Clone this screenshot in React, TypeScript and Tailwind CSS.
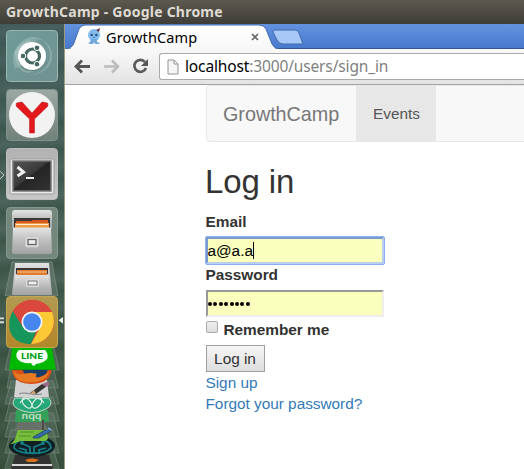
import React from "react";

function Tile({ children, tone }: { children: React.ReactNode; tone: string }) {
  return (
    <div className={`h-[52px] w-[52px] shrink-0 overflow-hidden rounded-[4px] border ${tone}`}>
      <svg viewBox="1 1 50 50" className="block h-full w-full">{children}</svg>
    </div>
  );
}

function Cabinet() {
  return (
    <g>
      <path d="M6 6 Q6 3 9 3 H43 Q46 3 46 6 V21 H6Z" fill="url(#silver)" />
      <path d="M8 11H44V21H8Z" fill="#393737" />
      <path d="M10 14H25L27 13H42V22H10Z" fill="#d65a1d" />
      <path d="M9 16H43V22H9Z" fill="#f09a45" />
      <path d="M10 17.5H42" stroke="#fff0dc" strokeWidth="1" />
      <path d="M7 21H45L46 45Q46 47 44 47H8Q6 47 6 45Z" fill="url(#silver)" />
      <path d="M7 21H45.5" stroke="#dedede" />
      <rect x="19.5" y="30" width="13" height="10" rx="1" fill="#dedede" stroke="#c9c9c9" />
      <rect x="22" y="32.5" width="8" height="5" fill="#eee" stroke="#666" strokeWidth="1.3" />
    </g>
  );
}

function Defs() {
  return (
    <svg className="absolute h-0 w-0">
      <defs>
        <linearGradient id="silver" x2="0" y2="1">
          <stop stopColor="#e3e3e3" /><stop offset=".5" stopColor="#bdbdbd" /><stop offset="1" stopColor="#a2a2a2" />
        </linearGradient>
        <linearGradient id="screen" x2="1" y2="1">
          <stop stopColor="#555" /><stop offset=".45" stopColor="#3b3b3b" /><stop offset=".5" stopColor="#252525" /><stop offset="1" stopColor="#333" />
        </linearGradient>
        <linearGradient id="tab" x2="0" y2="1">
          <stop stopColor="#fff" /><stop offset="1" stopColor="#f8f8f8" />
        </linearGradient>
      </defs>
    </svg>
  );
}

function FoldedStack() {
  return (
    <svg viewBox="0 348 65 121" className="block h-[121px] w-[65px] shrink-0">
      <g fill="#73877b" fillOpacity=".28" stroke="#86968d" strokeOpacity=".5">
        <path d="M10 348H54L59 370H5Z" />
        <path d="M11 366H53L58 388H7Z" />
        <path d="M11 381H53L59 404H5Z" />
        <path d="M11 397H53L59 421H5Z" />
        <path d="M11 413H53L59 437H5Z" />
        <path d="M11 430H53L59 453H5Z" />
        <path d="M11 447H53L59 469H5Z" />
      </g>
      <path d="M15 455H49L53 469H11Z" fill="#343333" />
      <path d="M12 465H52" stroke="#d8d8d8" strokeWidth="2" />
      <path d="M25 460Q32 457 39 460L35 462H28Z" fill="#dd721d" />
      <ellipse cx="32" cy="446" rx="23" ry="11" fill="#101f24" />
      <g fill="none" stroke="#147f88" strokeWidth="1.8">
        <path d="M14 448C13 435 51 435 51 448C45 455 20 455 14 448Z" />
        <path d="M30 454V447L23 444M34 454V447L42 444M26 454V450L19 448M39 454V450L46 448" />
        <circle cx="22" cy="443" r="1" /><circle cx="43" cy="443" r="1" />
      </g>
      <path d="M18 429H46L48 437Q48 441 44 441H20Q14 444 10 444Q15 441 16 436Z" fill="#78bd3c" />
      <path d="M20 432H34M19 436H31" stroke="#548f2e" strokeWidth="1" />
      <path d="M33 437L47 429L51 431L39 438L33 438Z" fill="#346ba2" stroke="#243f61" strokeWidth=".7" />
      <path d="M48 428L51 430" stroke="#7bace1" strokeWidth="2" />
      <path d="M16 410H48L49 422H15Z" fill="#35a058" />
      <path d="M18 422H44L48 430H14Z" fill="#697069" />
      <text x="31.5" y="419" textAnchor="middle" textLength="20" lengthAdjust="spacingAndGlyphs" fill="#b9dfc8" fontFamily="Lato, sans-serif" fontWeight="bold" fontSize="9">nqq</text>
      <path d="M43 420V430" stroke="#4c4c4c" strokeWidth="2" />
      <path d="M15 398H49Q54 405 46 409Q32 416 18 409Q10 405 15 398Z" fill="#26a777" stroke="#c1d9ce" />
      <g fill="none" stroke="#e3f2eb" strokeWidth="1.2">
        <ellipse cx="27" cy="403" rx="3.5" ry="6" transform="rotate(-42 27 403)" />
        <ellipse cx="37" cy="403" rx="3.5" ry="6" transform="rotate(42 37 403)" />
        <path d="M20 403C24 396 40 396 44 403" />
      </g>
      <path d="M16 380H47L49 397H14Z" fill="#d2d3d2" />
      <path d="M19 394C25 391 31 396 42 394" fill="none" stroke="#7c8085" />
      <path d="M30 393L42 384L47 386L36 394Z" fill="#363637" />
      <path d="M42 384L47 382L50 384L46 387Z" fill="#9d698a" />
      <path d="M30 394L34 390L36 394Z" fill="#cfa477" />
      <path d="M12 369H52Q51 378 43 382Q31 386 20 382Q12 378 12 369Z" fill="#d65017" />
      <path d="M22 369H48Q47 377 34 378Q25 377 22 369Z" fill="#173d68" />
      <path d="M13 370C19 379 25 370 37 374C32 380 44 378 49 371C49 382 28 385 19 380Q14 377 13 370Z" fill="#e67922" />
      <path d="M12 348H52L56 370H9Z" fill="#00b900" />
      <path d="M9.5 369.5H55.5" stroke="#07951a" />
      <path d="M19 350H45Q49 354 47 359Q44 363 36 364L34 366Q32 366 31 363Q20 364 17 358Q15 353 19 350Z" fill="#f5fff5" />
      <text x="32" y="359" textAnchor="middle" textLength="22" lengthAdjust="spacingAndGlyphs" fill="#009f16" fontFamily="Lato, sans-serif" fontWeight="900" fontSize="7.5">LINE</text>
    </svg>
  );
}

function Launcher() {
  return (
    <aside className="relative h-[445px] w-[65px] shrink-0 overflow-hidden border-r border-[#9c9b80] bg-[repeating-linear-gradient(174deg,#445e52_0px,#50675e_9px,#3b5548_20px,#485f51_28px)]">
      <div className="h-full w-[65px] bg-linear-to-b from-[#3e596180] via-[#40594b20] to-[#30472d90]">
        <div className="flex h-[237px] flex-col gap-[7px] pl-[6px] pt-[6px]">
          <Tile tone="border-[#9db5b2] bg-linear-to-br from-[#6e9b98] to-[#719292]">
            <path d="M9 39C-1 12 34-7 43 20C47 31 38 44 24 45C49 45 53 16 35 10C21 7 10 18 17 35Z" fill="#ceddda" opacity=".28" />
            <path d="M8 22Q19 5 36 12Q18 8 14 27Q10 42 28 41Q13 49 8 22Z" fill="#dbe7e4" opacity=".28" />
            <circle cx="26" cy="27" r="14" fill="#486f68" opacity=".5" />
            <circle cx="26" cy="26" r="14" fill="#fff" />
            <circle cx="26.5" cy="26" r="7" fill="none" stroke="#476862" strokeWidth="3.2" />
            <circle cx="17" cy="26" r="2.8" fill="#476862" stroke="white" />
            <circle cx="31" cy="17.8" r="2.8" fill="#476862" stroke="white" />
            <circle cx="31" cy="34.2" r="2.8" fill="#476862" stroke="white" />
          </Tile>
          <Tile tone="border-[#81918b] bg-linear-to-b from-[#9ba8a3] to-[#718279]">
            <circle cx="26" cy="26" r="23" fill="#f2f2f2" />
            <path d="M10.5 14L16 13L26 24L36 13L41.5 14L42 17L28.5 30V44H23.5V30L10 17Z" fill="#e3181c" stroke="#b51719" strokeWidth=".5" />
          </Tile>
          <Tile tone="border-[#bcbcbc] bg-linear-to-b from-[#b2b2b2] to-[#c7c7c7]">
            <rect x="4" y="11" width="44" height="35" rx="1" fill="#e8e8e8" stroke="#999" />
            <rect x="7" y="13" width="38" height="30" fill="url(#screen)" stroke="#777" strokeWidth="1.5" />
            <path d="M11.5 19L17.5 24L11.5 28" fill="none" stroke="#f0f0f0" strokeWidth="3" />
            <path d="M20 30H28" stroke="#eee" strokeWidth="2" />
          </Tile>
          <Tile tone="border-[#85978d] bg-[#73877d]"><Cabinet /></Tile>
        </div>
        <svg viewBox="0 0 65 35" className="block h-[35px] w-[65px]">
          <path d="M12 1H52L58 35H5Z" fill="#81928766" stroke="#87988e99" />
          <path d="M15 2H49L52 34H12Z" fill="url(#silver)" />
          <path d="M16 7H48V13H16Z" fill="#393737" />
          <path d="M17 9H47V14H17Z" fill="#e07a2c" />
          <path d="M17 11H47" stroke="#f7c68e" />
          <path d="M15 14H49L52 34H12Z" fill="url(#silver)" />
          <rect x="26" y="18" width="13" height="8" rx="1" fill="#dedede" />
          <rect x="28" y="20" width="9" height="4" fill="#eee" stroke="#777" />
        </svg>
        <div className="pl-[6px]">
          <Tile tone="border-[#c1a64f] bg-linear-to-b from-[#b29a51] to-[#b28828]">
            <circle cx="26" cy="26" r="22" fill="#dc4638" />
            <path d="M7 15L17 31L30 36L25 48C1 48 0 26 7 15Z" fill="#16965b" />
            <path d="M26 16H46C52 30 43 48 25 48L35 30Z" fill="#fbc934" />
            <path d="M7 15L17 31C14 22 19 16 26 16H46C38 0 16 0 7 15Z" fill="#d9473d" />
            <circle cx="26" cy="26" r="10.5" fill="#f4f4f4" />
            <circle cx="26" cy="26" r="8.8" fill="#4585ed" />
          </Tile>
        </div>
        <FoldedStack />
      </div>
      <svg className="absolute left-0 top-0 h-full w-full" viewBox="0 24 65 445">
        <path d="M0 170L4 174L0 178" fill="none" stroke="#ccd0ca" />
        <path d="M0 319.5H4M0 323.5H4" stroke="#d9dddb" strokeWidth="2" />
        <path d="M64 318V325L59.5 321.5Z" fill="#eee" />
      </svg>
    </aside>
  );
}

function BrowserHeader() {
  return (
    <header className="h-[61px] font-['Noto_Sans',sans-serif]">
      <div className="relative h-[25px] bg-linear-to-b from-[#6393df] to-[#4778cc]">
        <svg className="absolute inset-0" width="459" height="25">
          <path d="M0 24.5H459" stroke="#315793" />
          <path d="M0 25C7 24 8 22 10 16L14 5Q16 1 20 1H194Q199 1 201 5L207 20Q209 24 213 25Z" fill="url(#tab)" stroke="#416caf" />
          <path d="M6 25H210" stroke="#f8f8f8" strokeWidth="2" />
          <path d="M210 6H230Q233 6 234 9L238 20H218Q214 20 212 16L208 8Q208 6 210 6Z" fill="#a8c9f7" stroke="#416aad" />
        </svg>
        <div className="relative flex h-[25px] items-center pl-[22px]">
          <svg width="15" height="17" viewBox="0 0 15 17">
            <circle cx="7" cy="7" r="6" fill="#82bced" />
            <path d="M4 11L3 14L1 15L3 16H6L7 14L8 16H12L13 15L10 14L10 11" fill="#72a8dc" />
            <circle cx="4.7" cy="7" r="1.2" fill="#294e78" /><circle cx="9.3" cy="7" r="1.2" fill="#294e78" />
            <path d="M6 9.5H8" stroke="#427eb1" /><path d="M9 2L12 4L13 0Z" fill="#5e3041" />
          </svg>
          <span className="ml-[4px] w-[91px] whitespace-nowrap text-[14.5px] leading-[20px] tracking-[0.12px] text-black">GrowthCamp</span>
          <svg className="ml-[54px] mt-[1px]" width="8" height="8"><path d="M1 1L7 7M7 1L1 7" stroke="#666" strokeWidth="1.7" /></svg>
        </div>
      </div>
      <div className="flex h-[36px] border-b border-[#a3a3a3] bg-linear-to-b from-[#f9f9f9] to-[#e3e3e3] pl-[9px] pt-[4px]">
        <svg className="shrink-0" width="84" height="27" viewBox="74 53 84 27" fill="none">
          <path d="M82 60.5L76 66.5L82 72.5M77 66.5H90" stroke="#555" strokeWidth="2.8" />
          <path d="M104 66.5H117M112 60.5L118 66.5L112 72.5" stroke="#bcbcbc" strokeWidth="2.5" />
          <path d="M145 62A6 6 0 1 0 146 68" stroke="#5b5b5b" strokeWidth="2.7" />
          <path d="M141 66H148V59Z" fill="#555" />
        </svg>
        <div className="ml-[1px] flex h-[27px] flex-1 items-center rounded-l-[3px] border border-r-0 border-[#aaa] bg-white pl-[7px]">
          <svg width="12" height="16" fill="none"><path d="M1 1H7L11 5V15H1ZM7 1V5H11" fill="#f6f6f6" stroke="#949494" /></svg>
          <span className="-mt-[2px] ml-[6px] whitespace-nowrap text-[15.5px] leading-[24px] tracking-[-0.14px] text-[#7f7f7f]"><span className="text-black">localhost</span>:3000/users/sign_in</span>
        </div>
      </div>
    </header>
  );
}

export default function App() {
  return (
    <div className="h-[469px] w-[524px] overflow-hidden bg-white">
      <Defs />
      <div className="flex h-[24px] items-center bg-linear-to-b from-[#5c594e] to-[#3e3d38] pl-[6px] font-['Noto_Sans',sans-serif] text-[14px] font-bold leading-[24px] text-[#dfdbd2]">
        <span className="whitespace-nowrap tracking-[0.23px]">GrowthCamp - Google Chrome</span>
      </div>
      <div className="flex h-[445px]">
        <Launcher />
        <main className="min-w-0 flex-1">
          <BrowserHeader />
          <div className="pl-[141px] font-['Liberation_Sans',Arial,sans-serif] text-[15.4px] leading-[22px] tracking-[-0.03px] text-[#333]">
            <nav className="flex h-[57px] w-[380px] overflow-hidden rounded-[4px] border border-[#e7e7e7] bg-[#f8f8f8]">
              <div className="w-[149px] pl-[16px] pt-[17px] text-[19.8px] text-[#777]">GrowthCamp</div>
              <div className="h-[57px] w-[80px] bg-[#e7e7e7] pl-[17px] pt-[17px] text-[#555]">Events</div>
            </nav>
            <h1 className="-ml-[1px] mt-[22px] h-[36px] text-[33px] font-medium leading-[36px] tracking-[-0.1px]">Log in</h1>
            <div className="pt-[11px]">
              <label className="-ml-[0.5px] block h-[26px] font-bold">Email</label>
              <div className="flex h-[27px] w-[178px] items-center rounded-[1px] border-2 border-t-[#7a9bd0] border-l-[#7a9bd0] border-r-[#b9cfef] border-b-[#b9cfef] bg-[#faffbd] text-black outline-1 outline-[#8bb1f1]">
                <span className="-ml-[0.5px]">a@a.a</span><span className="h-[17px] w-px bg-black" />
              </div>
              <label className="-ml-[0.5px] block h-[26px] font-bold">Password</label>
              <div className="flex h-[27px] w-[178px] items-center gap-[1.4px] border-2 border-t-[#999] border-l-[#999] border-r-[#eee] border-b-[#eee] bg-[#faffbd]">
                {Array.from({ length: 8 }, (_, i) => <span key={i} className="h-[4px] w-[4px] rounded-full bg-black" />)}
              </div>
              <div className="flex h-[28px] pt-[2px]">
                <span className="mt-[2px] h-[12px] w-[12px] rounded-[2px] border border-[#aaa] bg-linear-to-b from-[#eee] to-[#ddd]" />
                <span className="ml-[5.5px] font-bold">Remember me</span>
              </div>
              <button className="block h-[27px] w-[59px] border border-[#a0a0a0] bg-linear-to-b from-[#f6f6f6] to-[#dedede] pr-[1px] text-center leading-[24px]">Log in</button>
              <div className="-ml-[0.5px] h-[21px] text-[#337ab7]">Sign up</div>
              <div className="-ml-[0.5px] whitespace-nowrap text-[#337ab7]">Forgot your password?</div>
            </div>
          </div>
        </main>
      </div>
    </div>
  );
}
